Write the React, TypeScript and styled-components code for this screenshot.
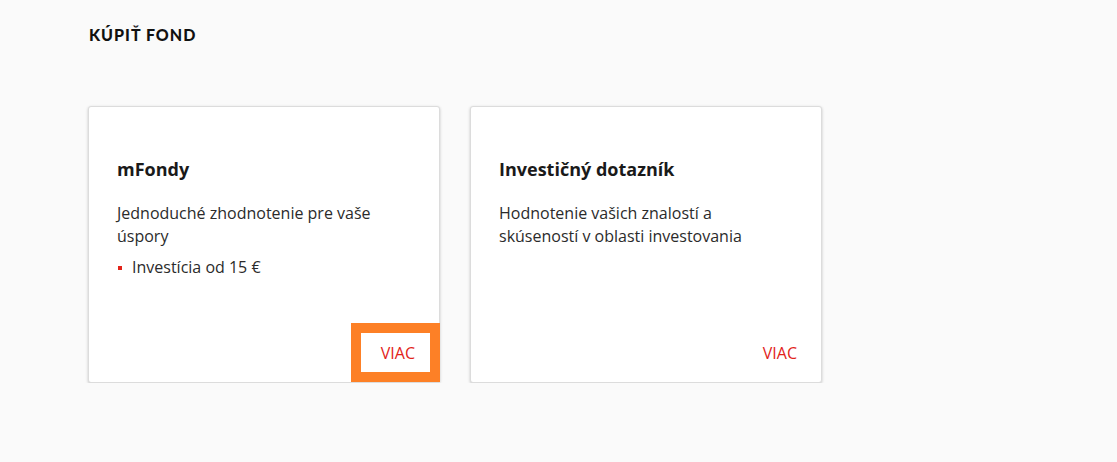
import React from 'react';
import styled, { createGlobalStyle } from 'styled-components';

const GlobalStyle = createGlobalStyle`
  html, body {
    margin: 0;
    padding: 0;
    background: #fafafa;
  }
  body {
    font-family: 'Open Sans', 'Liberation Sans', sans-serif;
    color: #222;
  }
`;

const Page = styled.div`
  padding: 25px 0 0 88px;
`;

const Heading = styled.h1`
  margin: 0 0 0 1px;
  font-family: Lato, 'Liberation Sans', sans-serif;
  font-weight: 900;
  font-size: 16px;
  line-height: 20px;
  letter-spacing: 1px;
  color: #111;
  text-transform: uppercase;
`;

const Cards = styled.div`
  display: flex;
  gap: 30px;
  margin-top: 61px;
`;

const Card = styled.div`
  box-sizing: border-box;
  width: 352px;
  height: 277px;
  display: flex;
  flex-direction: column;
  background: #fff;
  border: 1px solid #dcdcdc;
  border-radius: 3px;
  box-shadow: 0 1px 3px rgba(0, 0, 0, 0.22);
  padding: 50px 28px 0 28px;
`;

const Title = styled.h2`
  margin: 0;
  font-size: 18px;
  line-height: 24px;
  font-weight: 700;
  color: #1a1a1a;
`;

const Text = styled.p`
  margin: 21px 0 0;
  font-size: 16px;
  line-height: 23px;
  color: #2b2b2b;
`;

const List = styled.ul`
  list-style: none;
  margin: 8px 0 0;
  padding: 0;
`;

const Item = styled.li`
  display: flex;
  align-items: center;
  gap: 10px;
  font-size: 16px;
  line-height: 23px;
  color: #2b2b2b;

  &::before {
    content: '';
    width: 4px;
    height: 4px;
    margin-left: 1px;
    background: #e2231a;
  }
`;

const More = styled.a<{ $focused?: boolean }>`
  margin: auto -19px 10px 0;
  align-self: flex-end;
  display: flex;
  align-items: center;
  height: 39px;
  padding: 0 15px 0 20px;
  font-size: 16px;
  color: #e2231a;
  text-decoration: none;
  background: #fff;
  outline: ${p => (p.$focused ? '10px solid #fd8026' : 'none')};
  cursor: pointer;
`;

const cards = [
  {
    title: 'mFondy',
    text: 'Jednoduché zhodnotenie pre vaše úspory',
    bullets: ['Investícia od 15 €'],
    focused: true,
  },
  {
    title: 'Investičný dotazník',
    text: 'Hodnotenie vašich znalostí a skúseností v oblasti investovania',
    bullets: [],
    focused: false,
  },
];

export default function App() {
  return (
    <Page>
      <GlobalStyle />
      <Heading>Kúpiť fond</Heading>
      <Cards>
        {cards.map(card => (
          <Card key={card.title}>
            <Title>{card.title}</Title>
            <Text>{card.text}</Text>
            {card.bullets.length > 0 && (
              <List>
                {card.bullets.map(b => (
                  <Item key={b}>{b}</Item>
                ))}
              </List>
            )}
            <More $focused={card.focused}>VIAC</More>
          </Card>
        ))}
      </Cards>
    </Page>
  );
}
